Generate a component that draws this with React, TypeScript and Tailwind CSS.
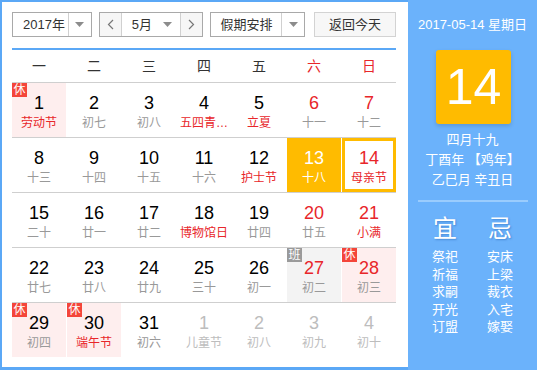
type Cell = {
  day: number;
  lunar: string;
  red?: boolean; // weekend number
  fest?: boolean; // festival text
  muted?: boolean; // other month
  bg?: "pink" | "grey";
  badge?: "休" | "班";
  state?: "selected" | "today";
};

const rows: Cell[][] = [
  [
    { day: 1, lunar: "劳动节", fest: true, bg: "pink", badge: "休" },
    { day: 2, lunar: "初七" },
    { day: 3, lunar: "初八" },
    { day: 4, lunar: "五四青…", fest: true },
    { day: 5, lunar: "立夏", fest: true },
    { day: 6, lunar: "十一", red: true },
    { day: 7, lunar: "十二", red: true },
  ],
  [
    { day: 8, lunar: "十三" },
    { day: 9, lunar: "十四" },
    { day: 10, lunar: "十五" },
    { day: 11, lunar: "十六" },
    { day: 12, lunar: "护士节", fest: true },
    { day: 13, lunar: "十八", red: true, state: "selected" },
    { day: 14, lunar: "母亲节", red: true, fest: true, state: "today" },
  ],
  [
    { day: 15, lunar: "二十" },
    { day: 16, lunar: "廿一" },
    { day: 17, lunar: "廿二" },
    { day: 18, lunar: "博物馆日", fest: true },
    { day: 19, lunar: "廿四" },
    { day: 20, lunar: "廿五", red: true },
    { day: 21, lunar: "小满", red: true, fest: true },
  ],
  [
    { day: 22, lunar: "廿七" },
    { day: 23, lunar: "廿八" },
    { day: 24, lunar: "廿九" },
    { day: 25, lunar: "三十" },
    { day: 26, lunar: "初一" },
    { day: 27, lunar: "初二", red: true, bg: "grey", badge: "班" },
    { day: 28, lunar: "初三", red: true, bg: "pink", badge: "休" },
  ],
  [
    { day: 29, lunar: "初四", bg: "pink", badge: "休" },
    { day: 30, lunar: "端午节", fest: true, bg: "pink", badge: "休" },
    { day: 31, lunar: "初六" },
    { day: 1, lunar: "儿童节", muted: true },
    { day: 2, lunar: "初八", muted: true },
    { day: 3, lunar: "初九", muted: true },
    { day: 4, lunar: "初十", muted: true },
  ],
];

const weekdays = ["一", "二", "三", "四", "五", "六", "日"];
const yi = ["祭祀", "祈福", "求嗣", "开光", "订盟"];
const ji = ["安床", "上梁", "裁衣", "入宅", "嫁娶"];

function Caret() {
  return (
    <svg width="9" height="5" viewBox="0 0 9 5" aria-hidden="true">
      <path d="M0 0h9L4.5 5z" fill="#8c8c8c" />
    </svg>
  );
}

function DayCell({ c }: { c: Cell }) {
  const selected = c.state === "selected";
  const today = c.state === "today";
  let bg = "bg-white";
  if (c.bg === "pink") bg = "bg-[#feeeee]";
  if (c.bg === "grey") bg = "bg-[#f3f3f3]";
  if (selected || today) bg = "bg-[#ffbb00]";

  let num = "text-black";
  if (c.red) num = "text-[#e8262a]";
  if (c.muted) num = "text-[#bdbdbd]";
  if (selected) num = "text-white";

  let sub = "text-[#999]";
  if (c.fest) sub = "text-[#e8262a]";
  if (c.muted) sub = "text-[#bdbdbd]";
  if (selected) sub = "text-white";

  return (
    <div className={`relative h-[54px] ${bg} ${today ? "p-[3px]" : ""}`}>
      <div className={`flex h-full flex-col items-center ${today ? "bg-white pt-[6px]" : "pt-[9px]"}`}>
        <span className={`text-[18px] leading-[22px] ${num}`}>{c.day}</span>
        <span className={`text-[12px] leading-[18px] whitespace-nowrap ${sub}`}>{c.lunar}</span>
      </div>
      {c.badge && (
        <span
          className={`absolute left-0 top-0 flex h-[14px] w-[15px] items-center justify-center text-[12px] leading-none text-white ${
            c.badge === "休" ? "bg-[#f4453a]" : "bg-[#9a9a9a]"
          }`}
        >
          {c.badge}
        </span>
      )}
    </div>
  );
}

export default function App() {
  return (
    <div
      className="flex h-[370px] w-[537px] bg-[#5ba8f6] text-[#333]"
      style={{ fontFamily: '"Liberation Sans", Arial, "Noto Sans CJK SC", sans-serif' }}
    >
      {/* Calendar grid */}
      <div className="mb-[3px] ml-[2px] mt-[2px] w-[406px] bg-white pl-[10px] pr-[12px] pt-[10px]">
        {/* Toolbar */}
        <div className="flex h-[25px] items-stretch text-[13px]">
          <div className="flex w-[80px] border border-[#a9a9a9]">
            <span className="flex w-[55px] items-center pl-[10px]">2017年</span>
            <span className="flex flex-1 items-center justify-center border-l border-[#d0d0d0]">
              <Caret />
            </span>
          </div>

          <div className="ml-[7px] flex w-[105px] border border-[#a9a9a9]">
            <span className="flex w-[22px] items-center justify-center border-r border-[#d0d0d0] bg-[#f6f6f6] text-[#777]">
              <svg width="7" height="11" viewBox="0 0 7 11" aria-hidden="true">
                <path d="M6 1L1.5 5.5L6 10" stroke="#777" strokeWidth="1.2" fill="none" />
              </svg>
            </span>
            <span className="flex flex-1 items-center justify-between pl-[10px] pr-[8px]">
              5月
              <Caret />
            </span>
            <span className="flex w-[22px] items-center justify-center border-l border-[#d0d0d0] bg-[#f6f6f6]">
              <svg width="7" height="11" viewBox="0 0 7 11" aria-hidden="true">
                <path d="M1 1L5.5 5.5L1 10" stroke="#777" strokeWidth="1.2" fill="none" />
              </svg>
            </span>
          </div>

          <div className="ml-[7px] flex w-[95px] border border-[#a9a9a9]">
            <span className="flex w-[70px] items-center justify-center">假期安排</span>
            <span className="flex flex-1 items-center justify-center border-l border-[#d0d0d0]">
              <Caret />
            </span>
          </div>

          <button className="ml-[9px] flex w-[82px] items-center justify-center border border-[#d3d3d3] bg-[#f7f7f7] text-[13px] text-[#333]">
            返回今天
          </button>
        </div>

        <div className="mt-[11px] h-[2px] bg-[#5ba8f6]" />

        {/* Weekday header */}
        <div className="grid h-[33px] grid-cols-[repeat(7,54px)] gap-x-px border-b border-[#cfcfcf] text-[14px]">
          {weekdays.map((w, i) => (
            <div key={w} className={`flex items-center justify-center ${i >= 5 ? "text-[#e8262a]" : "text-[#333]"}`}>
              {w}
            </div>
          ))}
        </div>

        {/* Days */}
        {rows.map((row, ri) => (
          <div
            key={ri}
            className={`grid grid-cols-[repeat(7,54px)] gap-x-px ${ri < rows.length - 1 ? "border-b border-[#cfcfcf]" : ""}`}
          >
            {row.map((c, ci) => (
              <DayCell key={ci} c={c} />
            ))}
          </div>
        ))}
      </div>

      {/* Side panel */}
      <div className="flex flex-1 flex-col items-center bg-[#6bb2fb] pt-[16px] text-white">
        <div className="text-[13px] leading-[18px]">2017-05-14 星期日</div>
        <div className="ml-[2px] mt-[16px] flex h-[74px] w-[75px] items-center justify-center rounded-[3px] bg-[#ffbb00] text-[50px] leading-none shadow-[0_2px_4px_rgba(0,0,0,0.15)]">
          14
        </div>
        <div className="mt-[6px] flex flex-col items-center text-[13px] leading-[20px]">
          <span>四月十九</span>
          <span>丁酉年 【鸡年】</span>
          <span>乙巳月 辛丑日</span>
        </div>
        <div className="mt-[10px] h-[2px] w-[110px] bg-[#9accfd]" />
        <div className="mt-[13px] grid grid-cols-[55px_55px] text-center">
          <span className="text-[24px] leading-[28px] [text-shadow:1px_1px_2px_rgba(0,60,140,0.35)]">宜</span>
          <span className="text-[24px] leading-[28px] [text-shadow:1px_1px_2px_rgba(0,60,140,0.35)]">忌</span>
          <div className="mt-[5px] flex flex-col text-[13px] leading-[17.6px]">
            {yi.map((t) => (
              <span key={t}>{t}</span>
            ))}
          </div>
          <div className="mt-[5px] flex flex-col text-[13px] leading-[17.6px]">
            {ji.map((t) => (
              <span key={t}>{t}</span>
            ))}
          </div>
        </div>
      </div>
    </div>
  );
}
